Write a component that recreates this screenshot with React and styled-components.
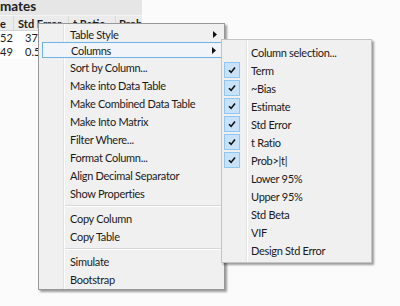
import React from 'react'
import styled, { createGlobalStyle } from 'styled-components'

const GlobalStyle = createGlobalStyle`
  body {
    margin: 0;
    background: #fbfbfb;
    font-family: Lato, "Noto Sans", sans-serif;
    color: #1b1b1b;
  }
`

const Canvas = styled.div`
  position: relative;
  width: 400px;
  height: 306px;
  overflow: hidden;
  background: #fbfbfb;
`

// report behind the menus
const Report = styled.div`
  width: 142px;
  display: flex;
  flex-direction: column;
`

const TitleBar = styled.div`
  height: 15px;
  line-height: 13px;
  background: #e6e6e6;
  font-size: 13.5px;
  font-weight: 700;
  color: #222;
  border-bottom: 1px solid #f4f4f4;
`

const TableRow = styled.div`
  display: grid;
  grid-template-columns: 13px 55px 47px 1fr;
  height: ${props => props.header ? '14px' : '13px'};
  line-height: ${props => props.header ? '15px' : '13px'};
  background: ${props => props.header ? '#ebebeb' : '#fff'};
  border-bottom: 1px solid ${props => props.header ? '#d4d4d4' : '#fff'};
  font-size: 11px;
  font-weight: ${props => props.header ? 700 : 400};
`

const Cell = styled.div`
  padding-left: ${props => props.pad ?? 4}px;
  white-space: nowrap;
  overflow: hidden;
  border-left: ${props => props.sep ? '1px solid #d8d8d8' : 'none'};
`

const Menu = styled.div`
  position: absolute;
  left: ${props => props.left}px;
  top: ${props => props.top}px;
  width: ${props => props.width}px;
  box-sizing: border-box;
  padding: ${props => props.pad};
  border: 1px solid ${props => props.edge};
  background:
    linear-gradient(to right,
      transparent ${props => props.gutter}px,
      #e2e3e3 ${props => props.gutter}px,
      #e2e3e3 ${props => props.gutter + 1}px,
      #ffffff ${props => props.gutter + 1}px,
      #ffffff ${props => props.gutter + 2}px,
      transparent ${props => props.gutter + 2}px),
    #f0f0f0;
  box-shadow: 2px 2px 2px rgba(0, 0, 0, 0.38);
  font-size: 11px;
  letter-spacing: -0.3px;
  color: #1a1a1a;
`

const Item = styled.div`
  display: flex;
  align-items: center;
  height: ${props => props.h || 18}px;
  box-sizing: border-box;
  padding-left: ${props => props.indent}px;
  padding-right: 7px;
  white-space: nowrap;
  ${props => props.active && `
    margin-left: 3px;
    margin-right: 1px;
    padding-left: ${props.indent - 3}px;
    padding-right: 6px;
    border: 1px solid #6db2e6;
    background: #f1f5f9;
  `}
`

const Label = styled.span`
  flex: 1;
`

const Separator = styled.div`
  height: 7px;
  display: flex;
  flex-direction: column;
  justify-content: center;
  margin-left: 26px;
  margin-right: 3px;
  &::before {
    content: '';
    height: 1px;
    background: #d7d7d7;
  }
  &::after {
    content: '';
    height: 1px;
    background: #fff;
  }
`

const CheckBox = styled.div`
  width: 16px;
  height: 16px;
  box-sizing: border-box;
  margin-left: 2px;
  margin-right: 11px;
  border: 1px solid #8fc6f3;
  background: #c8e3f9;
  display: flex;
  align-items: center;
  justify-content: center;
  visibility: ${props => props.on ? 'visible' : 'hidden'};
`

const Arrow = () => (
  <svg width="4" height="7" viewBox="0 0 4 7">
    <polygon points="0,0 4,3.5 0,7" fill="#111" />
  </svg>
)

const Check = () => (
  <svg width="10" height="10" viewBox="0 0 10 10">
    <path d="M2 5.2 L4.1 7.4 L8 2.4" fill="none" stroke="#111" strokeWidth="1.6" />
  </svg>
)

const mainItems = [
  { label: 'Table Style', sub: true, h: 16 },
  { label: 'Columns', sub: true, active: true, h: 16 },
  { label: 'Sort by Column...' },
  { label: 'Make into Data Table' },
  { label: 'Make Combined Data Table' },
  { label: 'Make Into Matrix' },
  { label: 'Filter Where...' },
  { label: 'Format Column...' },
  { label: 'Align Decimal Separator' },
  { label: 'Show Properties' },
  { sep: true },
  { label: 'Copy Column' },
  { label: 'Copy Table' },
  { sep: true },
  { label: 'Simulate' },
  { label: 'Bootstrap' },
]

const columnItems = [
  { label: 'Column selection...' },
  { label: 'Term', on: true },
  { label: '~Bias', on: true },
  { label: 'Estimate', on: true },
  { label: 'Std Error', on: true },
  { label: 't Ratio', on: true },
  { label: 'Prob>|t|', on: true },
  { label: 'Lower 95%' },
  { label: 'Upper 95%' },
  { label: 'Std Beta' },
  { label: 'VIF' },
  { label: 'Design Std Error' },
]

export default function App() {
  return (
    <Canvas>
      <GlobalStyle />
      <Report>
        <TitleBar>mates</TitleBar>
        <TableRow header>
          <Cell pad={0}>e</Cell>
          <Cell sep>Std Error</Cell>
          <Cell sep>t Ratio</Cell>
          <Cell sep pad={3}>Prob&gt;|t|</Cell>
        </TableRow>
        <TableRow>
          <Cell pad={0}>52</Cell>
          <Cell pad={12}>37.</Cell>
          <Cell />
          <Cell />
        </TableRow>
        <TableRow>
          <Cell pad={0}>49</Cell>
          <Cell pad={12}>0.5</Cell>
          <Cell />
          <Cell />
        </TableRow>
      </Report>

      <Menu left={38} top={23} width={187} pad="2px 0 1px" edge="#979797" gutter={24}>
        {mainItems.map((it, i) =>
          it.sep ? (
            <Separator key={i} />
          ) : (
            <Item key={i} indent={31} h={it.h} active={it.active}>
              <Label>{it.label}</Label>
              {it.sub && <Arrow />}
            </Item>
          )
        )}
      </Menu>

      <Menu left={221} top={39} width={151} pad="3px 0 3px" edge="#c4c4c4" gutter={24}>
        {columnItems.map((it, i) => (
          <Item key={i} indent={0}>
            <CheckBox on={it.on}>{it.on && <Check />}</CheckBox>
            <Label>{it.label}</Label>
          </Item>
        ))}
      </Menu>
    </Canvas>
  )
}
